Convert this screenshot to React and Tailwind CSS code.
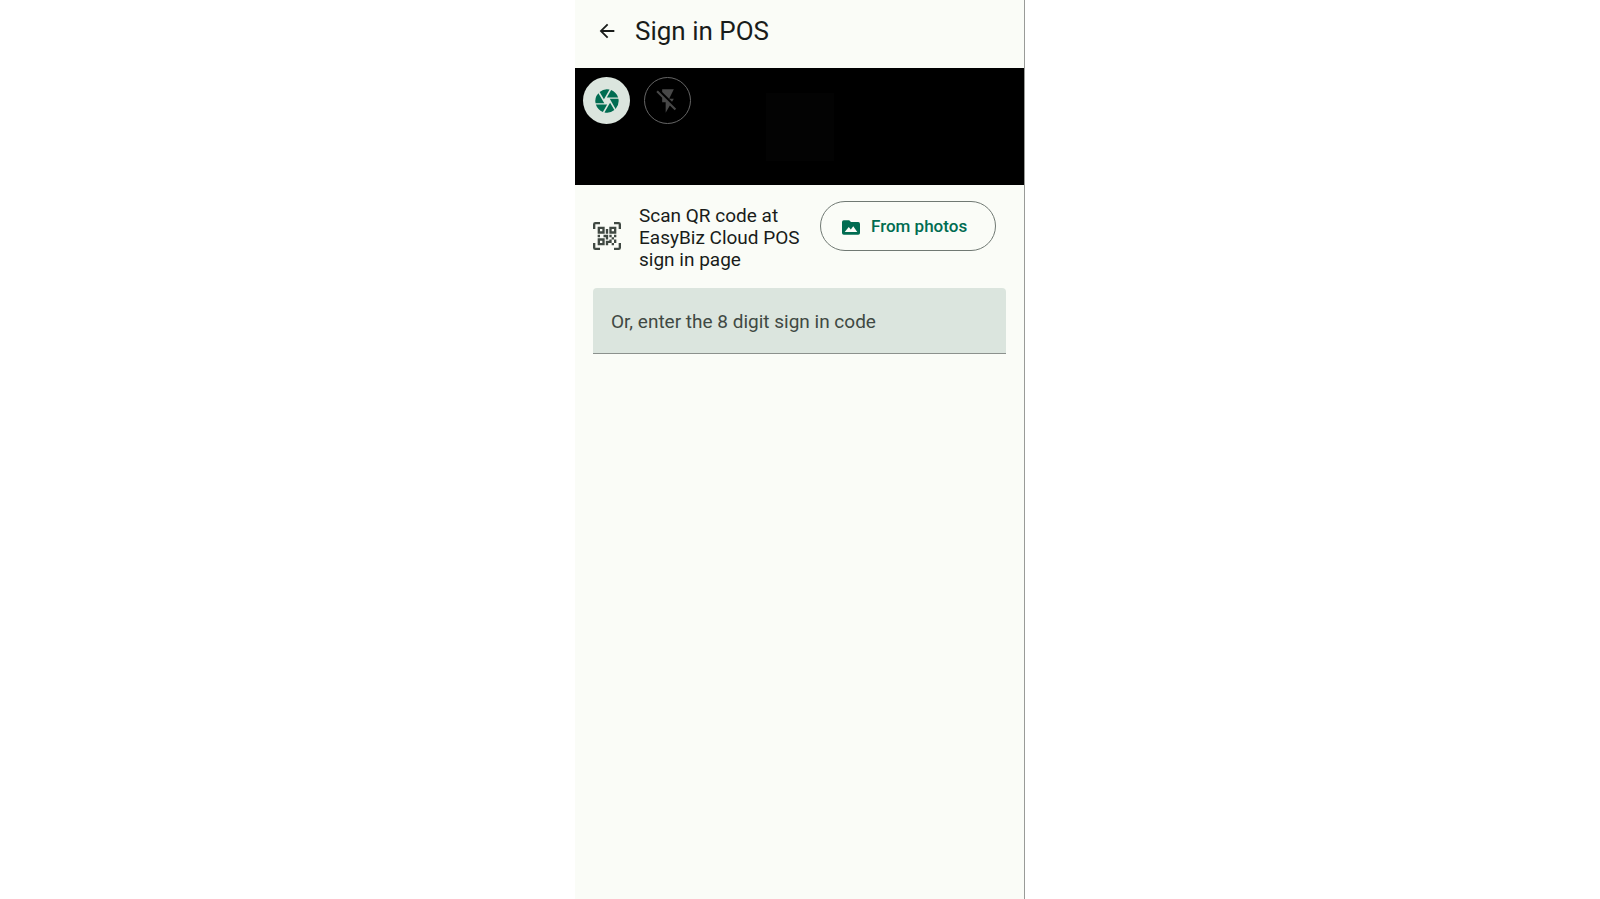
import { MdArrowBack, MdCamera, MdFlashOff } from "react-icons/md";

function FolderImageIcon() {
  return (
    <svg viewBox="2 4 20 16" className="h-[15px] w-[18px]" aria-hidden="true">
      <path
        fill="currentColor"
        d="M5 17L9.500 11.500L11.800 14.300L14.500 10.500L19 17M20 6H12L10 4H4A2 2 0 0 0 2 6V18A2 2 0 0 0 4 20H20A2 2 0 0 0 22 18V8A2 2 0 0 0 20 6Z"
        fillRule="evenodd"
      />
    </svg>
  );
}

function QrScanIcon() {
  return (
    <svg viewBox="0 0 24 24" className="mt-[21px] size-7 shrink-0 text-[#404943]" aria-hidden="true">
      <path
        fill="currentColor"
        d="M4,4H10V10H4V4M20,4V10H14V4H20M14,15H16V13H14V11H16V13H18V11H20V13H18V15H20V18H18V20H16V18H13V20H11V16H14V15M16,15V18H18V15H16M4,20V14H10V20H4M6,6V8H8V6H6M16,6V8H18V6H16M6,16V18H8V16H6M4,11H6V13H4V11M9,11H13V15H11V13H9V11M11,6H13V10H11V6M2,2V6H0V2A2,2 0 0,1 2,0H6V2H2M22,0A2,2 0 0,1 24,2V6H22V2H18V0H22M2,18V22H6V24H2A2,2 0 0,1 0,22V18H2M22,22V18H24V22A2,2 0 0,1 22,24H18V22H22Z"
      />
    </svg>
  );
}

function Header() {
  return (
    <header className="flex h-[68px] items-center gap-4 px-5 pb-[6px]">
      <button type="button" aria-label="Back" className="flex p-px text-[#191c1a]">
        <MdArrowBack className="size-[22px]" />
      </button>
      <h1 className="text-[26px] leading-8 text-[#191c1a]">Sign in POS</h1>
    </header>
  );
}

function CameraPreview() {
  return (
    <section aria-label="Camera preview" className="relative h-[117px] bg-black px-2 py-[9px]">
      <div className="absolute inset-0 flex items-center justify-center" aria-hidden="true">
        <div className="size-[68px] bg-[#030303]" />
      </div>
      <div className="relative flex gap-[14px]">
        <button
          type="button"
          aria-label="Switch camera"
          className="flex size-[47px] items-center justify-center rounded-full bg-[#dbe5de] text-[#006c51]"
        >
          <MdCamera className="size-7" />
        </button>
        <button
          type="button"
          aria-label="Toggle flash"
          className="flex size-[47px] items-center justify-center rounded-full border border-[#666666] text-[#484848]"
        >
          <MdFlashOff className="size-7" />
        </button>
      </div>
    </section>
  );
}

export default function App() {
  return (
    <div className="min-h-screen bg-white font-['Roboto',sans-serif]">
      <div className="mx-auto max-w-[450px]">
        <main className="min-h-screen border-r border-[#999b98] bg-[#fafcf7]">
          <Header />
          <CameraPreview />
          <div className="px-[18px] pt-4">
            <div className="flex items-start">
              <QrScanIcon />
              <p className="ml-[18px] mt-1 w-[164px] text-[19px] leading-[22px] text-[#191c1a]">
                Scan QR code at EasyBiz Cloud POS sign in page
              </p>
              <button
                type="button"
                className="ml-auto mr-[10px] flex h-[50px] w-[176px] shrink-0 items-center gap-[11px] rounded-full border border-[#707973] pl-[21px] pt-[2px] text-[17px] font-medium text-[#006c51]"
              >
                <FolderImageIcon />
                From photos
              </button>
            </div>
            <input
              type="text"
              inputMode="numeric"
              maxLength={8}
              aria-label="Sign in code"
              placeholder="Or, enter the 8 digit sign in code"
              className="mt-[17px] h-[66px] w-full rounded-t border-b border-[#8b918d] bg-[#dbe5de] px-[18px] pt-[2px] text-[19px] text-[#191c1a] outline-none placeholder:text-[#404943]"
            />
          </div>
        </main>
      </div>
    </div>
  );
}
